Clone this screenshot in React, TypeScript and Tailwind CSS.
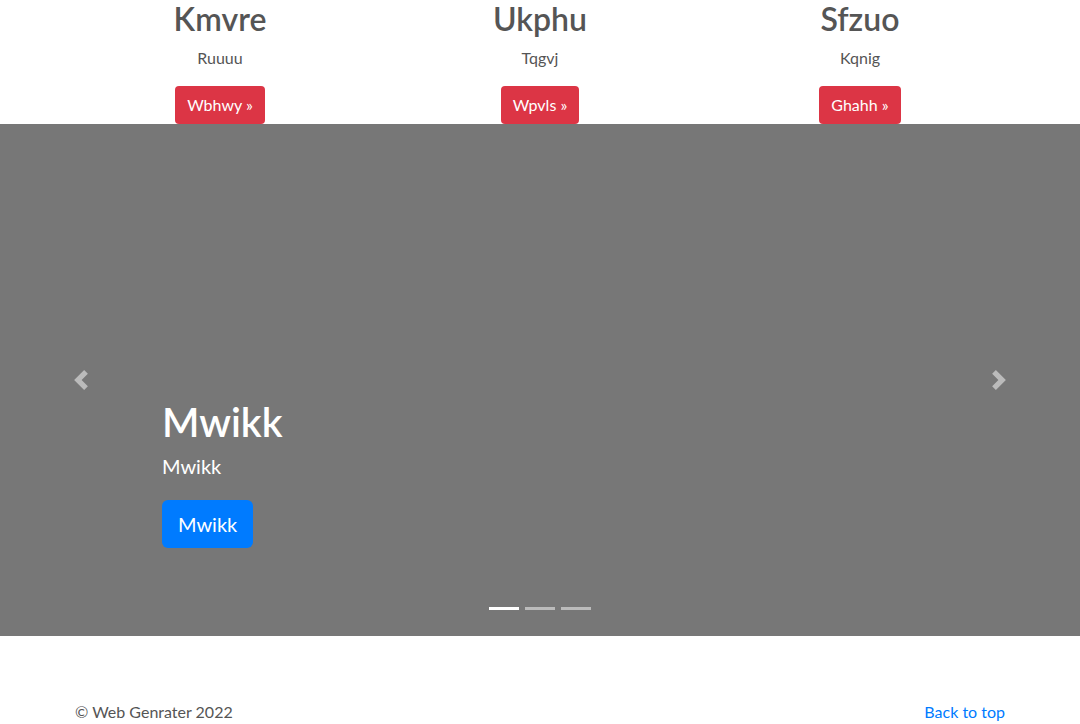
const columns = [
  { title: 'Kmvre', text: 'Ruuuu', button: 'Wbhwy' },
  { title: 'Ukphu', text: 'Tqgvj', button: 'Wpvls' },
  { title: 'Sfzuo', text: 'Kqnig', button: 'Ghahh' },
];

function Arrow({ dir }: { dir: 'prev' | 'next' }) {
  return (
    <svg viewBox="0 0 8 8" className="w-5 h-5" fill="currentColor">
      {dir === 'prev' ? (
        <path d="M5.25 0l-4 4 4 4 1.5-1.5L4.25 4l2.5-2.5L5.25 0z" />
      ) : (
        <path d="M2.75 0l-1.5 1.5L3.75 4l-2.5 2.5L2.75 8l4-4-4-4z" />
      )}
    </svg>
  );
}

export default function App() {
  return (
    <div className="min-h-[724px] bg-white text-[#555] overflow-hidden" style={{ fontFamily: 'Lato, "Noto Sans", sans-serif' }}>
      {/* Marketing columns */}
      <div className="mx-auto w-[960px]">
        <div className="grid grid-cols-3">
          {columns.map((c) => (
            <div key={c.title} className="flex flex-col items-center text-center px-[15px]">
              <h2 className="text-[32px] leading-[38px] font-semibold mb-2 text-[#555]">{c.title}</h2>
              <p className="text-[16px] leading-6 mb-4 text-[#555]">{c.text}</p>
              <button className="h-[38px] px-3 rounded-[4px] bg-[#dc3545] text-white text-[16px] leading-6">
                {c.button} &raquo;
              </button>
            </div>
          ))}
        </div>
      </div>

      {/* Carousel */}
      <div className="relative h-[512px] bg-[#777] flex">
        <button className="w-[15%] flex items-center justify-center text-white/50">
          <Arrow dir="prev" />
        </button>
        <div className="flex-1 flex flex-col justify-end pb-[88px] text-white">
          <h1 className="text-[40px] leading-[48px] font-semibold mb-[5px]">Mwikk</h1>
          <p className="text-[20px] leading-[30px] mb-[19px]">Mwikk</p>
          <div>
            <button className="h-[48px] px-4 rounded-[6px] bg-[#007bff] text-white text-[20px] leading-[30px]">
              Mwikk
            </button>
          </div>
        </div>
        <button className="w-[15%] flex items-center justify-center text-white/50">
          <Arrow dir="next" />
        </button>
        <div className="absolute left-0 right-0 bottom-[26px] flex justify-center gap-[6px]">
          <span className="w-[30px] h-[3px] bg-white" />
          <span className="w-[30px] h-[3px] bg-white/50" />
          <span className="w-[30px] h-[3px] bg-white/50" />
        </div>
      </div>

      {/* Footer */}
      <footer className="mx-auto w-[960px] px-[15px] pt-[64px] flex justify-between text-[16px] leading-6">
        <p className="text-[#555]">&copy; Web Genrater 2022</p>
        <a href="#" className="text-[#007bff]">Back to top</a>
      </footer>
    </div>
  );
}
